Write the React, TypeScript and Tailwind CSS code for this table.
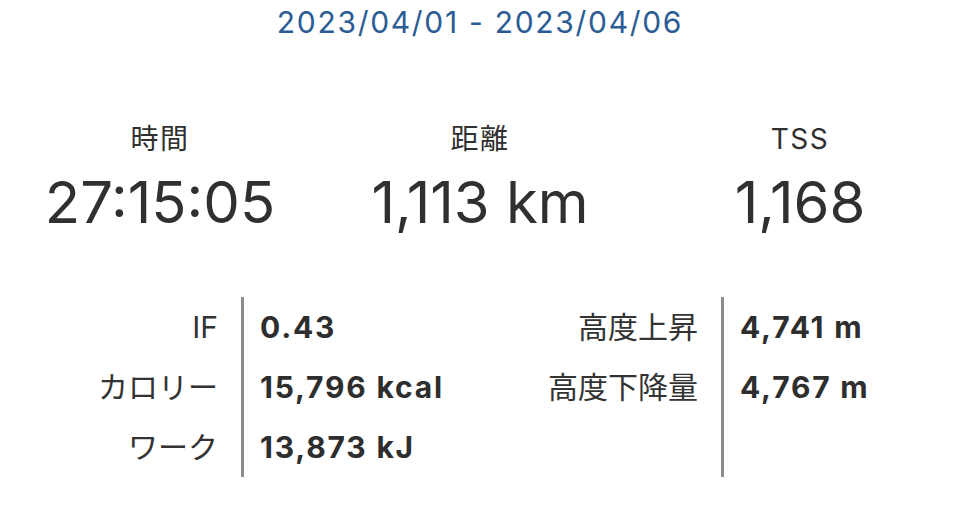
const font = { fontFamily: 'Inter, "Noto Sans CJK JP", sans-serif' }

const totals = [
  { label: '時間', value: '27:15:05' },
  { label: '距離', value: '1,113 km' },
  { label: 'TSS', value: '1,168' },
]

const left = [
  { label: 'IF', value: '0.43' },
  { label: 'カロリー', value: '15,796 kcal' },
  { label: 'ワーク', value: '13,873 kJ' },
]

const right = [
  { label: '高度上昇', value: '4,741 m' },
  { label: '高度下降量', value: '4,767 m' },
]

function DetailGroup({ rows }: { rows: { label: string; value: string }[] }) {
  return (
    <div className="flex">
      <div className="w-[241px] flex flex-col items-end pr-[23px]">
        {rows.map((r) => (
          <div key={r.label} className="h-[60px] flex items-center text-[30px] text-[#333333]">
            {r.label}
          </div>
        ))}
      </div>
      <div className="w-[3px] h-[180px] bg-[#8c8c8c]" />
      <div className="flex flex-col pl-[16px]">
        {rows.map((r) => (
          <div
            key={r.label}
            className="h-[60px] flex items-center text-[30px] font-bold tracking-[1.8px] text-[#2e2e2e]"
          >
            {r.value}
          </div>
        ))}
      </div>
    </div>
  )
}

export default function App() {
  return (
    <div className="w-[960px] h-[529px] bg-white overflow-hidden" style={font}>
      <div className="h-[44px] flex items-center justify-center text-[30px] tracking-[1.7px] text-[#2b5c95]">
        2023/04/01 - 2023/04/06
      </div>

      <div className="grid grid-cols-3 mt-[75px]">
        {totals.map((t) => (
          <div key={t.label} className="flex flex-col items-center text-[#303030]">
            <div className="h-[40px] flex items-center text-[28px] tracking-[1.5px]">{t.label}</div>
            <div className="h-[86px] flex items-center text-[58px] leading-none">{t.value}</div>
          </div>
        ))}
      </div>

      <div className="grid grid-cols-2 mt-[52px]">
        <DetailGroup rows={left} />
        <DetailGroup rows={right} />
      </div>
    </div>
  )
}
